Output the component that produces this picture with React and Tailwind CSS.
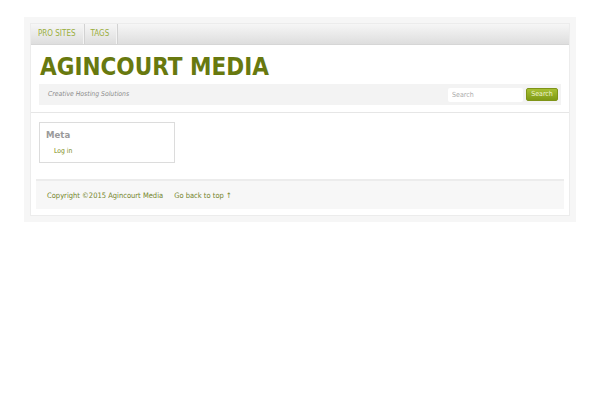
import React from 'react'

const font = { fontFamily: '"DejaVu Sans Condensed", "DejaVu Sans", Verdana, sans-serif' }

function Nav() {
  return (
    <div className="flex h-[21px] border-b border-[#d6d6d6] bg-gradient-to-b from-[#f6f6f6] to-[#dedede]">
      <a className="flex items-center border-r border-[#f4f4f4] px-[7px] text-[8px] text-[#9aae3c] shadow-[1px_0_0_#d2d2d2]">
        PRO SITES
      </a>
      <a className="flex items-center border-r border-[#f4f4f4] px-[7px] text-[8px] text-[#9aae3c] shadow-[1px_0_0_#d2d2d2]">
        TAGS
      </a>
    </div>
  )
}

function Header() {
  return (
    <div className="border-b border-[#e6e6e6] px-[8px] pb-[7px] pt-[10px]">
      <h1 className="pl-[1px] text-[24px] font-bold leading-[24px] text-[#68790f]">
        AGINCOURT MEDIA
      </h1>
      <div className="mt-[5px] flex h-[21px] items-center justify-between bg-[#f3f3f3] pl-[9px] pr-[3px]">
        <span className="text-[6.8px] italic text-[#8c8c8c]">
          Creative Hosting Solutions
        </span>
        <div className="flex items-center gap-[3px]">
          <input
            className="h-[14px] w-[75px] rounded-[2px] bg-white px-[4px] text-[7px] text-[#999] outline-none placeholder:text-[#aaa]"
            placeholder="Search"
          />
          <button className="h-[13px] w-[32px] rounded-[2px] border border-[#7f9418] bg-gradient-to-b from-[#a7c032] to-[#7f9a14] text-[7px] text-[#eef4d0]">
            Search
          </button>
        </div>
      </div>
    </div>
  )
}

function Sidebar() {
  return (
    <div className="ml-[8px] mt-[9px] h-[41px] w-[136px] border border-[#dcdcdc] px-[6px] pt-[6px]">
      <h3 className="text-[9.5px] font-bold leading-[12px] text-[#9a9a9a]">Meta</h3>
      <ul className="mt-[6px] pl-[8px]">
        <li className="text-[6.8px] leading-[9px] text-[#7a8a12]">Log in</li>
      </ul>
    </div>
  )
}

function Footer() {
  return (
    <div className="mx-[5px] mt-[16px] flex h-[30px] items-center gap-[11px] border-t-2 border-[#ececec] bg-[#f7f7f7] pl-[11px] pt-[1px] text-[7.5px] text-[#75852a]">
      <span>Copyright ©2015 Agincourt Media</span>
      <span>Go back to top ↑</span>
    </div>
  )
}

export default function App() {
  return (
    <div className="min-h-[400px] bg-white pt-[17px]" style={font}>
      <div className="mx-auto w-[552px] bg-[#f6f6f6] p-[6px]">
        <div className="border border-[#ececec] bg-white pb-[6px]">
          <Nav />
          <Header />
          <Sidebar />
          <Footer />
        </div>
      </div>
    </div>
  )
}
